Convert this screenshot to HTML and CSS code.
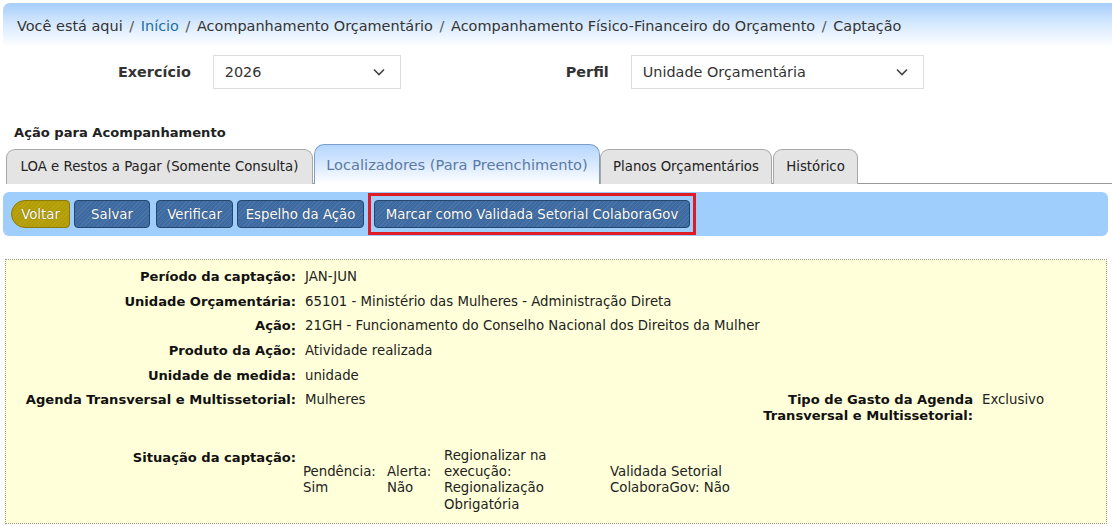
FILE: index.html
```html
<!DOCTYPE html>
<html lang="pt-BR">
<head>
    <meta charset="UTF-8">
    <title>Captação - Acompanhamento Físico-Financeiro</title>
    <link rel="stylesheet" href="styles.css">
</head>
<body>
    <div class="pagina">
        <!-- Trilha de navegação -->
        <div class="breadcrumb">
            Você está aqui <span class="sep">/</span>
            <a href="#">Início</a> <span class="sep">/</span>
            Acompanhamento Orçamentário <span class="sep">/</span>
            Acompanhamento Físico-Financeiro do Orçamento <span class="sep">/</span>
            Captação
        </div>

        <!-- Filtros -->
        <div class="filtros">
            <div class="campo campo-exercicio">
                <label>Exercício</label>
                <div class="select">
                    <span>2026</span>
                    <svg class="chevron" width="12" height="8" viewBox="0 0 12 8"><path d="M1 1.5l5 5 5-5" fill="none" stroke="#444" stroke-width="1.6"/></svg>
                </div>
            </div>
            <div class="campo campo-perfil">
                <label>Perfil</label>
                <div class="select">
                    <span>Unidade Orçamentária</span>
                    <svg class="chevron" width="12" height="8" viewBox="0 0 12 8"><path d="M1 1.5l5 5 5-5" fill="none" stroke="#444" stroke-width="1.6"/></svg>
                </div>
            </div>
        </div>

        <h3 class="titulo">Ação para Acompanhamento</h3>

        <!-- Abas -->
        <div class="abas">
            <a class="aba aba-loa" href="#">LOA e Restos a Pagar (Somente Consulta)</a>
            <a class="aba ativa" href="#">Localizadores (Para Preenchimento)</a>
            <a class="aba aba-planos" href="#">Planos Orçamentários</a>
            <a class="aba aba-historico" href="#">Histórico</a>
        </div>

        <!-- Barra de botões -->
        <div class="toolbar">
            <button class="btn btn-voltar">Voltar</button>
            <button class="btn btn-salvar">Salvar</button>
            <button class="btn btn-verificar">Verificar</button>
            <button class="btn btn-espelho">Espelho da Ação</button>
            <div class="destaque">
                <button class="btn btn-marcar">Marcar como Validada Setorial ColaboraGov</button>
            </div>
        </div>

        <!-- Dados da captação -->
        <div class="painel">
            <div class="grade">
                <div class="rotulo">Período da captação:</div>
                <div class="valor largo">JAN-JUN</div>

                <div class="rotulo">Unidade Orçamentária:</div>
                <div class="valor largo">65101 - Ministério das Mulheres - Administração Direta</div>

                <div class="rotulo">Ação:</div>
                <div class="valor largo">21GH - Funcionamento do Conselho Nacional dos Direitos da Mulher</div>

                <div class="rotulo">Produto da Ação:</div>
                <div class="valor largo">Atividade realizada</div>

                <div class="rotulo">Unidade de medida:</div>
                <div class="valor largo">unidade</div>

                <div class="rotulo">Agenda Transversal e Multissetorial:</div>
                <div class="valor">Mulheres</div>
                <div class="rotulo rotulo-dir">Tipo de Gasto da Agenda Transversal e Multissetorial:</div>
                <div class="valor">Exclusivo</div>

                <div class="rotulo situacao">Situação da captação:</div>
                <div class="valor largo situacao">
                    <div class="status">
                        <div class="status-item st-pend">Pendência: Sim</div>
                        <div class="status-item st-alerta">Alerta: Não</div>
                        <div class="status-item st-reg"><span>Regionalizar na execução: Regionalização Obrigatória</span></div>
                        <div class="status-item st-valid"><span>Validada Setorial ColaboraGov: Não</span></div>
                    </div>
                </div>
            </div>
        </div>
    </div>
</body>
</html>
```

FILE: styles.css
```css
body {
    margin: 0;
    background: #fff;
    color: #222;
    font-family: 'DejaVu Sans', Verdana, sans-serif;
    font-size: 13.3px;
}

.pagina {
    padding: 3px 4px 0 3px;
}

/* trilha */
.breadcrumb {
    background: linear-gradient(to bottom, #a6cefb 0%, #d4e8fe 45%, #ffffff 100%);
    border-top-left-radius: 7px;
    padding: 14px 14px 12px;
    font-size: 14.45px;
    line-height: 18px;
    color: #333;
    margin-right: -4px;
}

.breadcrumb a {
    color: #1c6ea4;
    text-decoration: none;
}

.breadcrumb .sep {
    color: #555;
    margin: 0 2px;
}

/* filtros */
.filtros {
    display: flex;
    align-items: center;
    margin-top: 8px;
}

.campo {
    display: flex;
    align-items: center;
}

.campo label {
    font-weight: bold;
    font-size: 14.4px;
    color: #333;
    text-align: right;
    margin-right: 22px;
}

.campo-exercicio {
    margin-left: 115px;
}

.campo-perfil {
    margin-left: 165px;
}

.select {
    border: 1px solid #ddd;
    display: flex;
    align-items: center;
    justify-content: space-between;
    padding: 0 15px 0 11px;
    font-size: 14.4px;
    color: #333;
    box-sizing: border-box;
    height: 34px;
}

.campo-exercicio .select {
    width: 188px;
}

.campo-perfil .select {
    width: 293px;
}

.titulo {
    font-size: 13.1px;
    color: #222;
    margin: 36px 0 0 11px;
}

/* abas */
.abas {
    display: flex;
    align-items: flex-end;
    margin: 4px -4px 0 3px;
    border-bottom: 1px solid #9a9a9a;
    height: 40px;
    box-sizing: border-box;
}

.aba {
    display: block;
    box-sizing: border-box;
    height: 35px;
    border: 1px solid #a8a8a8;
    border-bottom: none;
    border-radius: 9px 9px 0 0;
    background: #e4e4e4;
    color: #222;
    text-decoration: none;
    font-size: 13.3px;
    line-height: 34px;
    text-align: center;
    margin-bottom: -1px;
}

.aba-loa {
    width: 307px;
    margin-right: 1px;
}

.aba.ativa {
    height: 40px;
    width: 286px;
    background: linear-gradient(to bottom, #b5d6fd 0%, #dcebfe 55%, #ffffff 100%);
    border-color: #7d9ecb;
    border-radius: 10px 10px 0 0;
    color: #5b7aa6;
    font-size: 14.6px;
    line-height: 40px;
}

.aba-planos {
    width: 172px;
}

.aba-historico {
    width: 85px;
    margin-left: 1px;
}

/* barra de botões */
.toolbar {
    display: flex;
    align-items: center;
    gap: 4px;
    background: #a0cefc;
    border-radius: 6px;
    margin-top: 8px;
    padding: 2px 8px;
    height: 44px;
    box-sizing: border-box;
}

.btn {
    height: 28px;
    font-family: 'DejaVu Sans', Verdana, sans-serif;
    font-size: 13.3px;
    color: #fff;
    text-shadow: 0 0 1px rgba(0, 0, 0, 0.5);
    border: 1px solid #25476f;
    border-radius: 4px;
    background-color: #3d6ba1;
    background-image: repeating-linear-gradient(135deg, rgba(255, 255, 255, 0.07) 0 1px, transparent 1px 3px);
    padding: 0;
    cursor: pointer;
    box-sizing: border-box;
}

.btn-voltar {
    width: 59px;
    background-color: #b39d04;
    border-color: #8c7a05;
    border-radius: 14px 4px 4px 14px;
}

.btn-salvar {
    width: 76px;
}

.btn-verificar {
    width: 77px;
    margin-left: 2px;
}

.btn-espelho {
    width: 127px;
}

.destaque {
    border: 3px solid #e11b24;
    padding: 4px 3px;
}

.btn-marcar {
    width: 316px;
}

/* painel de dados */
.painel {
    margin: 23px 1px 0 2px;
    background: #ffffd9;
    border: 1px dotted #9a9a8a;
    padding: 5px 4px 10px 0;
}

.grade {
    display: grid;
    grid-template-columns: 290px 1fr 222px 120px;
    column-gap: 9px;
    line-height: 16px;
}

.rotulo {
    font-weight: bold;
    font-size: 13.1px;
    color: #111;
    text-align: right;
    padding: 4.3px 0;
}

.valor {
    padding: 4.3px 0;
    color: #222;
}

.valor.largo {
    grid-column: span 3;
}

.situacao {
    margin-top: 15px;
}

.rotulo.situacao {
    padding-top: 6px;
}

.valor.situacao {
    padding: 4px 0 0;
}

.status {
    display: flex;
    align-items: center;
    margin-left: -2px;
    line-height: 16.4px;
}

.status-item {
    flex: none;
}

.st-pend {
    width: 84px;
}

.st-alerta {
    width: 57px;
}

.st-reg {
    width: 166px;
}

.st-reg span {
    display: block;
    width: 112px;
}

.st-valid span {
    display: block;
    width: 135px;
}
```
